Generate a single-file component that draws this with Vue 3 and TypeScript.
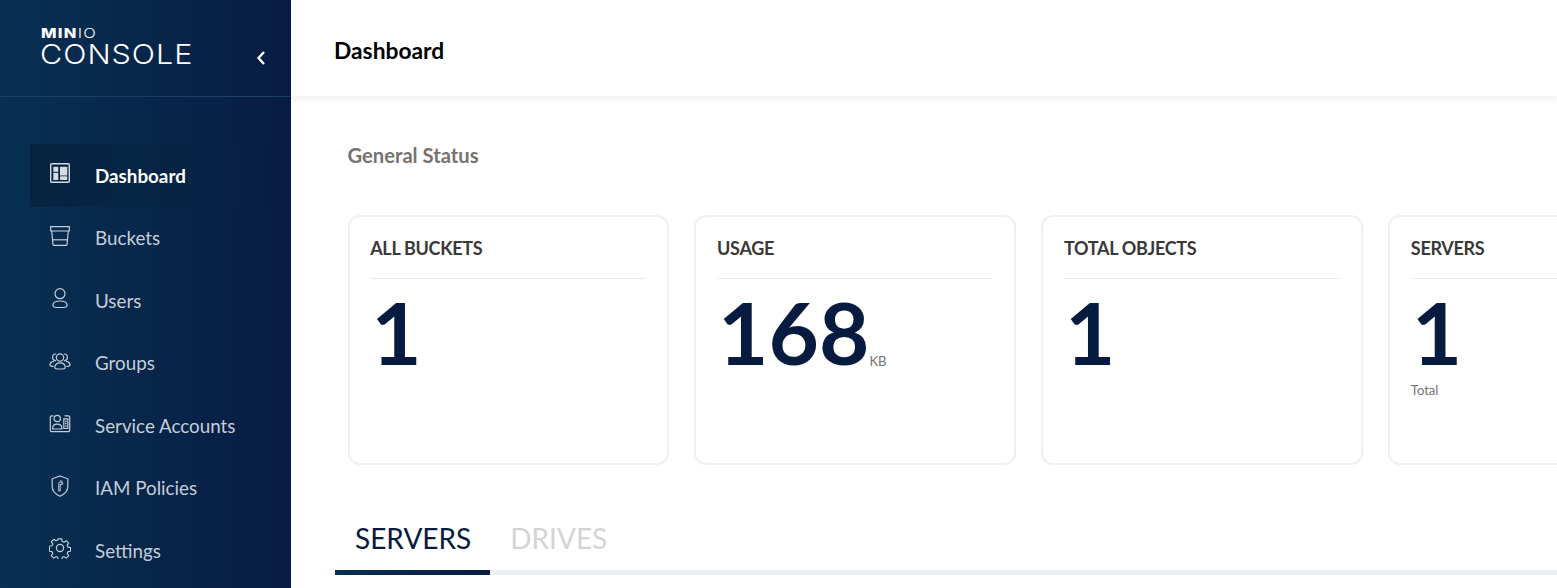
<script setup lang="ts">
interface NavItem { label: string; icon: string; active?: boolean }
const nav: NavItem[] = [
  { label: 'Dashboard', icon: 'dashboard', active: true },
  { label: 'Buckets', icon: 'buckets' },
  { label: 'Users', icon: 'users' },
  { label: 'Groups', icon: 'groups' },
  { label: 'Service Accounts', icon: 'accounts' },
  { label: 'IAM Policies', icon: 'policies' },
  { label: 'Settings', icon: 'settings' },
]
interface Card { title: string; value: string; unit?: string; note?: string }
const cards: Card[] = [
  { title: 'ALL BUCKETS', value: '1' },
  { title: 'USAGE', value: '168', unit: 'KB' },
  { title: 'TOTAL OBJECTS', value: '1' },
  { title: 'SERVERS', value: '1', note: 'Total' },
]
</script>

<template>
  <div class="page">
    <aside class="sidebar">
      <div class="brand">
        <div class="logo">
          <div class="logo-top"><b>MIN</b><span>IO</span></div>
          <div class="logo-main">CONSOLE</div>
        </div>
        <svg class="collapse" width="10" height="16" viewBox="0 0 10 16" fill="none" stroke="#fff" stroke-width="2.4">
          <path d="M8 2 2.5 8 8 14" />
        </svg>
      </div>
      <nav class="nav">
        <a v-for="item in nav" :key="item.label" class="nav-item" :class="{ active: item.active }">
          <span class="nav-icon">
            <svg width="22" height="22" viewBox="0 0 22 22" fill="none" stroke="currentColor" stroke-width="1.2">
              <g v-if="item.icon === 'dashboard'">
                <rect x="1.7" y="1.7" width="18.600" height="18.600" rx="1" stroke-width="1.4" />
                <rect x="4.300" y="4.800" width="5" height="5" fill="currentColor" stroke="none" />
                <rect x="4.300" y="10.800" width="5" height="7.200" fill="currentColor" stroke="none" />
                <rect x="11" y="4.800" width="7.300" height="8.700" fill="currentColor" stroke="none" />
                <rect x="11" y="14.300" width="7.300" height="3.700" rx="1" fill="currentColor" stroke="none" />
              </g>
              <g v-else-if="item.icon === 'buckets'">
                <path d="M1.700 1.700h18.600v4.300H1.700z" />
                <path d="M2.700 6 4 19.300a1.200 1.200 0 0 0 1.200 1h11.600a1.200 1.200 0 0 0 1.200-1L19.300 6" />
                <path d="M3.400 14.800h15.200" />
              </g>
              <g v-else-if="item.icon === 'users'">
                <circle cx="11" cy="6.700" r="5" />
                <path d="M7.500 20.500c-2.800 0-4-1.400-3.600-3 .5-2 2.800-3.500 7.100-3.500s6.600 1.500 7.100 3.500c.4 1.600-.8 3-3.600 3z" />
              </g>
              <g v-else-if="item.icon === 'groups'">
                <circle cx="11" cy="7.500" r="3.700" />
                <path d="M5.800 17.700c0-2.900 2-4.800 5.200-4.800s5.200 1.900 5.200 4.800c0 .8-1.500 1.300-5.200 1.300s-5.200-.5-5.200-1.300z" />
                <path d="M6.900 10.700a2.900 2.900 0 0 1 .1-6.700M15.100 10.700a2.900 2.900 0 0 0-.1-6.700" />
                <path d="M4.800 16.500c-2.600 0-3.800-.6-3.800-1.500 0-2 1.500-3.400 4-3.600M17.200 16.500c2.600 0 3.800-.6 3.800-1.500 0-2-1.500-3.400-4-3.600" />
              </g>
              <g v-else-if="item.icon === 'accounts'">
                <path d="M4.500 3.800H2.700a1.400 1.400 0 0 0-1.400 1.400v13a1.400 1.400 0 0 0 1.400 1.400h16.600a1.400 1.400 0 0 0 1.400-1.400v-13a1.400 1.400 0 0 0-1.400-1.400H15.500" />
                <circle cx="8.200" cy="6.500" r="3.200" />
                <path d="M3.500 17c0-3 2-4.800 4.700-4.800s4.700 1.800 4.700 4.800z" />
                <path d="M14.800 6.800h4v9.700h-4zM16 9.300h1.600M16 11.700h1.600M16 14.100h1.600" />
              </g>
              <g v-else-if="item.icon === 'policies'">
                <path d="M11 1 18.800 3.800v7.700c0 4.400-3.300 7.700-7.800 9.700-4.500-2-7.800-5.300-7.800-9.700V3.800z" />
                <path d="M9.800 16V8.200a1.300 1.300 0 0 1 2.600 0v1.300h-1.200V16z" stroke-width="1" />
                <path d="M11.200 5.500a2.700 2.700 0 0 1 1.900 4.400" stroke-width="1" />
              </g>
              <g v-else>
                <circle cx="11" cy="11" r="3.600" />
                <path d="M9.100 1.300h3.800l.5 2.800 1.900.8 2.300-1.600 2.600 2.600-1.600 2.300.8 1.900 2.800.5v3.800l-2.800.5-.8 1.900 1.600 2.300-2.600 2.600-2.300-1.600-1.900.8-.5 2.800H9.100l-.5-2.800-1.900-.8-2.300 1.600-2.600-2.600 1.600-2.300-.8-1.900-2.800-.5V9.100l2.800-.5.8-1.900L1.800 4.400l2.600-2.600 2.300 1.600 1.900-.8z" stroke-linejoin="round" transform="translate(.6 .6) scale(.945)" />
              </g>
            </svg>
          </span>
          <span class="nav-label">{{ item.label }}</span>
        </a>
      </nav>
    </aside>

    <main class="main">
      <header class="topbar"><h1>Dashboard</h1></header>
      <section class="content">
        <h2 class="section-title">General Status</h2>
        <div class="cards">
          <article v-for="card in cards" :key="card.title" class="card">
            <h3 class="card-title">{{ card.title }}</h3>
            <div class="card-value">
              <span class="value">{{ card.value }}</span>
              <span v-if="card.unit" class="unit">{{ card.unit }}</span>
            </div>
            <div v-if="card.note" class="note">{{ card.note }}</div>
          </article>
        </div>
        <div class="tabs">
          <button class="tab active">SERVERS</button>
          <button class="tab">DRIVES</button>
        </div>
      </section>
    </main>
  </div>
</template>

<style scoped>
.page {
  display: flex;
  width: 1557px;
  height: 588px;
  overflow: hidden;
  background: #fff;
  font-family: Lato, "Liberation Sans", sans-serif;
}
.sidebar {
  flex: 0 0 291px;
  height: 588px;
  background: linear-gradient(90deg, #073052 0%, #081c42 100%);
  color: #fff;
}
.brand {
  height: 96px;
  border-bottom: 1px solid #1c3e6b;
  padding: 0 25px 0 41px;
  display: flex;
  justify-content: space-between;
  align-items: flex-start;
}
.logo { padding-top: 25px; }
.logo-top {
  font-family: Inter, "Liberation Sans", sans-serif;
  font-size: 13px;
  line-height: 16px;
  height: 16px;
  white-space: nowrap;
  transform: scaleX(1.27);
  transform-origin: left center;
}
.logo-top b { font-weight: 800; letter-spacing: 1px; }
.logo-top span { font-weight: 300; letter-spacing: 1px; }
.logo-main {
  font-family: Inter, "Liberation Sans", sans-serif;
  font-weight: 300;
  font-size: 27px;
  line-height: 27px;
  letter-spacing: 0.9px;
  white-space: nowrap;
  margin-left: -1px;
  transform: scaleX(1.13);
  transform-origin: left center;
}
.collapse { margin-top: 50px; }
.nav { padding-top: 47.3px; }
.nav-item {
  display: flex;
  align-items: center;
  height: 62.5px;
  margin-left: 30px;
  color: #c5ced9;
  font-size: 18.8px;
}
.nav-item.active {
  color: #fff;
  font-weight: 700;
  background: linear-gradient(90deg, #06233f 0%, rgba(6, 28, 58, 0) 100%);
}
.nav-item.active .nav-icon { color: #d5dbe2; }
.nav-icon {
  flex: 0 0 65px;
  display: flex;
  padding-left: 19px;
  box-sizing: border-box;
  margin-bottom: 5px;
}
.nav-label { white-space: nowrap; margin-bottom: 0.8px; }
.main { flex: 1; min-width: 0; }
.topbar {
  height: 96px;
  display: flex;
  align-items: center;
  padding: 4px 0 0 43px;
  box-sizing: border-box;
  box-shadow: 0 3px 8px rgba(0, 0, 0, 0.07);
}
.topbar h1 {
  margin: 0;
  font-size: 22.8px;
  font-weight: 700;
  color: #000;
}
.content { padding: 0 0 0 44px; }
.section-title {
  margin: 0;
  padding: 47px 0 0 12.500px;
  height: 72px;
  box-sizing: border-box;
  font-size: 20.200px;
  line-height: 24px;
  font-weight: 700;
  color: #767270;
}
.cards {
  display: flex;
  gap: 25px;
  padding: 47px 0 0 12.550px;
}
.card {
  flex: 0 0 321.900px;
  height: 250px;
  box-sizing: border-box;
  border: 2px solid #eef1f4;
  border-radius: 12px;
  padding: 20px 21px 20px 20.600px;
}
.card-title {
  margin: 0;
  height: 41px;
  border-bottom: 1px solid #eaedee;
  font-size: 18px;
  line-height: 22px;
  font-weight: 700;
  letter-spacing: -0.3px;
  color: #393939;
  white-space: nowrap;
}
.card-value {
  display: flex;
  align-items: flex-end;
  padding: 9px 0 0 1px;
}
.value {
  font-size: 87px;
  line-height: 87px;
  font-weight: 700;
  color: #071b40;
}
.unit {
  font-size: 13px;
  line-height: 14px;
  color: #767270;
  margin: 0 0 7px 0;
}
.note {
  font-size: 13px;
  line-height: 14px;
  margin-top: 8px;
  color: #767270;
}
.tabs {
  display: flex;
  margin-top: 45px;
  border-bottom: 5px solid #eceff3;
  height: 60px;
}
.tab {
  font-family: inherit;
  font-size: 28px;
  line-height: 34px;
  background: none;
  border: 0;
  padding: 0 19px 4px 20px;
  height: 60px;
  color: #d4d4d4;
  display: block;
}
.tab.active {
  color: #071b40;
  position: relative;
}
.tab.active::after {
  content: "";
  position: absolute;
  left: 0;
  right: 0;
  bottom: -5px;
  height: 5px;
  background: linear-gradient(90deg, #073052, #081c42);
}
</style>
